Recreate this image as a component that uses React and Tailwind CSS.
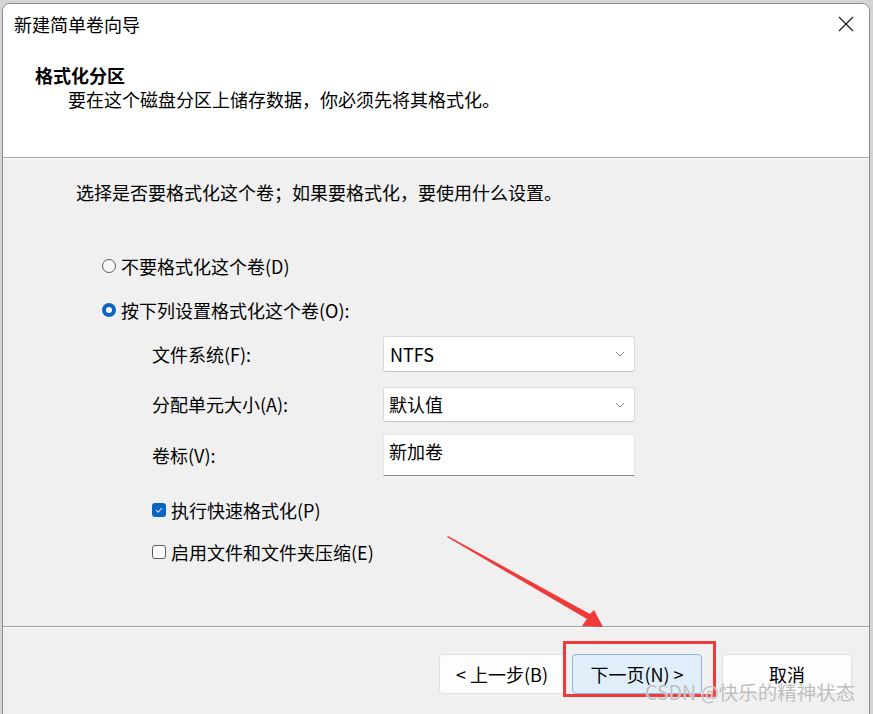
import React from 'react';

const font = { fontFamily: '"Noto Sans CJK SC", "Noto Sans", sans-serif' };

function Radio({ checked, label }) {
  return (
    <div className="flex h-[24px] items-center">
      {checked ? (
        <span className="flex h-[14px] w-[14px] items-center justify-center rounded-full bg-[#0a64c2]">
          <span className="h-[6px] w-[6px] rounded-full bg-white" />
        </span>
      ) : (
        <span className="h-[14px] w-[14px] rounded-full border border-[#5c5c5c] bg-[#f8f8f8]" />
      )}
      <span className="ml-[5px] text-[18px] leading-[24px] text-black">{label}</span>
    </div>
  );
}

function Check({ checked, label }) {
  return (
    <div className="flex h-[24px] items-center">
      {checked ? (
        <span className="flex h-[14px] w-[14px] items-center justify-center rounded-[3px] bg-[#0a64c2]">
          <svg width="10" height="10" viewBox="0 0 10 10" fill="none">
            <path d="M2 5.2 L4.1 7.2 L8 3" stroke="#cfe2f7" strokeWidth="1.1" />
          </svg>
        </span>
      ) : (
        <span className="h-[14px] w-[14px] rounded-[3px] border border-[#5c5c5c] bg-[#fbfbfb]" />
      )}
      <span className="ml-[5px] text-[18px] leading-[24px] text-black">{label}</span>
    </div>
  );
}

function Chevron() {
  return (
    <svg width="10" height="6" viewBox="0 0 10 6" fill="none">
      <path d="M1 1 L5 5 L9 1" stroke="#8a8a8a" strokeWidth="1" />
    </svg>
  );
}

export default function App() {
  return (
    <div className="relative h-[714px] w-[873px] overflow-hidden bg-[#d4d4d4]" style={font}>
      <div className="absolute left-[2px] top-[3px] flex h-[720px] w-[868px] flex-col overflow-hidden rounded-t-[8px] rounded-bl-[8px] border border-[#8c8c8c] bg-[#f0f0f0]">
        {/* header */}
        <div className="flex h-[153px] flex-col bg-white">
          <div className="flex h-[40px] items-center justify-between pl-[11px] pr-[15px]">
            <span className="text-[18px] text-black">新建简单卷向导</span>
            <svg width="16" height="16" viewBox="0 0 16 16" fill="none">
              <path d="M1 1 L15 15 M15 1 L1 15" stroke="#1a1a1a" strokeWidth="1.2" />
            </svg>
          </div>
          <div className="mt-[19px] pl-[32px] text-[18px] font-bold leading-[24px] text-black">格式化分区</div>
          <div className="pl-[65px] text-[18px] leading-[24px] text-black">要在这个磁盘分区上储存数据，你必须先将其格式化。</div>
        </div>
        <div className="h-[1px] bg-[#a0a0a0]" />
        <div className="h-[1px] bg-white" />

        {/* body */}
        <div className="flex h-[467px] flex-col pl-[73px] pt-[21px]">
          <div className="text-[18px] leading-[24px] text-black">选择是否要格式化这个卷；如果要格式化，要使用什么设置。</div>
          <div className="ml-[26px] mt-[50px] flex flex-col gap-[20px]">
            <Radio label="不要格式化这个卷(D)" />
            <Radio checked label="按下列设置格式化这个卷(O):" />
          </div>
          <div className="ml-[76px] mt-[14px] flex flex-col">
            <div className="flex h-[36px] items-center">
              <span className="w-[231px] text-[18px] text-black">文件系统(F):</span>
              <div className="flex h-[36px] w-[252px] items-center justify-between rounded-[3px] border border-[#dadada] border-b-[#c4c4c4] bg-white pl-[6px] pr-[9px]">
                <span className="text-[18px] text-black">NTFS</span>
                <Chevron />
              </div>
            </div>
            <div className="mt-[15px] flex h-[35px] items-center">
              <span className="w-[231px] text-[18px] text-black">分配单元大小(A):</span>
              <div className="flex h-[35px] w-[252px] items-center justify-between rounded-[3px] border border-[#dadada] border-b-[#c4c4c4] bg-white pl-[5px] pr-[9px]">
                <span className="text-[18px] text-black">默认值</span>
                <Chevron />
              </div>
            </div>
            <div className="mt-[12px] flex h-[42px] items-center">
              <span className="w-[231px] text-[18px] text-black">卷标(V):</span>
              <div className="h-[42px] w-[252px] rounded-t-[3px] border border-[#e4e4e4] border-b-[#8a8a8a] bg-white pl-[5px] pt-[4px]">
                <span className="text-[18px] leading-[24px] text-black">新加卷</span>
              </div>
            </div>
            <div className="mt-[22px] flex flex-col gap-[18px]">
              <Check checked label="执行快速格式化(P)" />
              <Check label="启用文件和文件夹压缩(E)" />
            </div>
          </div>
        </div>
        <div className="h-[1px] bg-[#a0a0a0]" />
        <div className="h-[1px] bg-white" />

        {/* footer */}
        <div className="flex justify-end gap-[7px] pr-[17px] pt-[26px]">
          <button className="h-[40px] w-[126px] rounded-[4px] border border-[#e0e0e0] bg-[#fdfdfd] text-[18px] text-black">&lt; 上一步(B)</button>
          <button className="h-[40px] w-[130px] rounded-[4px] border border-[#8ab8ea] bg-[#e0eef9] text-[18px] text-black">下一页(N) &gt;</button>
          <button className="ml-[13px] h-[40px] w-[130px] rounded-[4px] border border-[#e0e0e0] bg-[#fdfdfd] text-[18px] text-black">取消</button>
        </div>
      </div>

      {/* annotations */}
      <div className="absolute left-[563px] top-[641px] h-[56px] w-[153px] border-[3px] border-[#f03a3a]" />
      <svg className="absolute left-0 top-0" width="873" height="714" viewBox="0 0 873 714">
        <polygon points="447,537 448,536 590,614 594,610 603,627 582,626 587,619" fill="#f03a3a" />
      </svg>
      <div className="absolute left-[645px] top-[679px] text-[19.5px] leading-[26px] text-[#bdbdbd]" style={{ textShadow: '0 0 1px #fff' }}>
        CSDN @快乐的精神状态
      </div>
    </div>
  );
}
